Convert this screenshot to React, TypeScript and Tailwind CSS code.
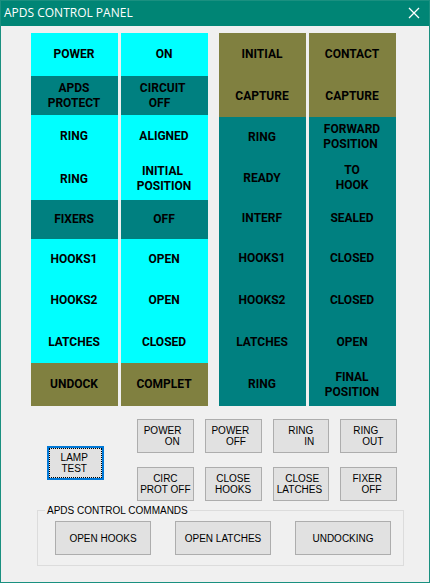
type Tone = 'cyan' | 'teal' | 'olive';
type Lamp = { text: string; tone: Tone; height: string };

const TONES: Record<Tone, string> = {
  cyan: 'bg-[#00ffff]',
  teal: 'bg-[#008080]',
  olive: 'bg-[#808040]',
};

const LEFT_ROWS: { tone: Tone; height: string }[] = [
  { tone: 'cyan', height: 'h-[43px]' },
  { tone: 'teal', height: 'h-[39px]' },
  { tone: 'cyan', height: 'h-[43px]' },
  { tone: 'cyan', height: 'h-[42px]' },
  { tone: 'teal', height: 'h-[39px]' },
  { tone: 'cyan', height: 'h-[40px]' },
  { tone: 'cyan', height: 'h-[42px]' },
  { tone: 'cyan', height: 'h-[42px]' },
  { tone: 'olive', height: 'h-[43px]' },
];

const RIGHT_ROWS: { tone: Tone; height: string }[] = [
  { tone: 'olive', height: 'h-[42px]' },
  { tone: 'olive', height: 'h-[42px]' },
  { tone: 'teal', height: 'h-[40px]' },
  { tone: 'teal', height: 'h-[42px]' },
  { tone: 'teal', height: 'h-[39px]' },
  { tone: 'teal', height: 'h-[41px]' },
  { tone: 'teal', height: 'h-[42px]' },
  { tone: 'teal', height: 'h-[42px]' },
  { tone: 'teal', height: 'h-[43px]' },
];

const lamps = (rows: { tone: Tone; height: string }[], texts: string[]): Lamp[] =>
  rows.map((row, i) => ({ ...row, text: texts[i] }));

const COLUMNS: Lamp[][][] = [
  [
    lamps(LEFT_ROWS, ['POWER', 'APDS\nPROTECT', 'RING', 'RING', 'FIXERS', 'HOOKS1', 'HOOKS2', 'LATCHES', 'UNDOCK']),
    lamps(LEFT_ROWS, ['ON', 'CIRCUIT \nOFF   ', 'ALIGNED', 'INITIAL \nPOSITION', 'OFF', 'OPEN', 'OPEN', 'CLOSED', 'COMPLET']),
  ],
  [
    lamps(RIGHT_ROWS, ['INITIAL', 'CAPTURE', 'RING', 'READY', 'INTERF', 'HOOKS1', 'HOOKS2', 'LATCHES', 'RING']),
    lamps(RIGHT_ROWS, ['CONTACT', 'CAPTURE', 'FORWARD\nPOSITION ', 'TO\nHOOK', 'SEALED', 'CLOSED', 'CLOSED', 'OPEN', 'FINAL\nPOSITION']),
  ],
];

const KEYS = [
  'POWER  \n     ON',
  'POWER  \n  OFF',
  'RING\n      IN',
  'RING  \n   OUT',
  'CIRC\nPROT OFF',
  'CLOSE\nHOOKS',
  ' CLOSE\nLATCHES ',
  'FIXER \n  OFF',
];

const COMMANDS = ['OPEN HOOKS', 'OPEN LATCHES', 'UNDOCKING'];

function LampColumn({ items }: { items: Lamp[] }) {
  return (
    <div className="flex-1">
      {items.map((lamp, i) => (
        <div
          key={i}
          className={`flex items-center justify-center pr-px text-center font-['Roboto',sans-serif] text-[12px] leading-[15px] font-bold whitespace-pre ${lamp.height} ${TONES[lamp.tone]}`}
        >
          {lamp.text}
        </div>
      ))}
    </div>
  );
}

function PanelButton({ label }: { label: string }) {
  return (
    <button
      type="button"
      className="flex h-[34px] items-center justify-center border border-[#adadad] bg-[#e1e1e1] text-center leading-[11px] whitespace-pre"
    >
      {label}
    </button>
  );
}

export default function App() {
  return (
    <div className="flex min-h-screen flex-col border border-[#1a9080] bg-[#f0f0f0] font-['Liberation_Sans',Arial,sans-serif] text-[10px] text-black">
      <header className="flex h-[25px] items-center justify-between bg-[#008575] pr-[9px] pb-px pl-[3px] text-white">
        <h1 className="font-['Open_Sans','Noto_Sans',sans-serif] text-[12px] leading-4">APDS CONTROL PANEL</h1>
        <button type="button" aria-label="Close">
          <svg className="size-3" viewBox="0 0 12 12" fill="none" stroke="currentColor" strokeWidth="1.3">
            <path d="M1 1l10 10M11 1L1 11" />
          </svg>
        </button>
      </header>

      <main className="flex flex-col">
        <section className="flex gap-[11px] pt-[7px] pr-[33px] pl-[30px]">
          {COLUMNS.map((pair, i) => (
            <div key={i} className="flex flex-1 gap-[3px]">
              {pair.map((items, j) => (
                <LampColumn key={j} items={items} />
              ))}
            </div>
          ))}
        </section>

        <section className="flex items-end gap-[33px] pt-[13px] pr-[32px] pl-[46px]">
          <button
            type="button"
            className="mb-[21px] h-[34px] w-[57px] border-2 border-[#0078d7] bg-[#e1e1e1] outline-none"
          >
            <span className="flex h-full items-center justify-center border border-dotted border-black text-center leading-[11px] whitespace-pre">
              {'LAMP \nTEST '}
            </span>
          </button>
          <div className="grid flex-1 grid-cols-4 gap-x-[11px] gap-y-[14px]">
            {KEYS.map((label) => (
              <PanelButton key={label} label={label} />
            ))}
          </div>
        </section>

        <fieldset className="mt-1 mr-[25px] ml-[36px] border border-[#dcdcdc] px-[11px] pt-[5px] pb-[10px]">
          <legend className="-ml-1 px-[2px] leading-[11px]">APDS CONTROL COMMANDS</legend>
          <div className="grid grid-cols-3 gap-x-6 pr-px pl-[6px]">
            {COMMANDS.map((label) => (
              <PanelButton key={label} label={label} />
            ))}
          </div>
        </fieldset>
      </main>
    </div>
  );
}
